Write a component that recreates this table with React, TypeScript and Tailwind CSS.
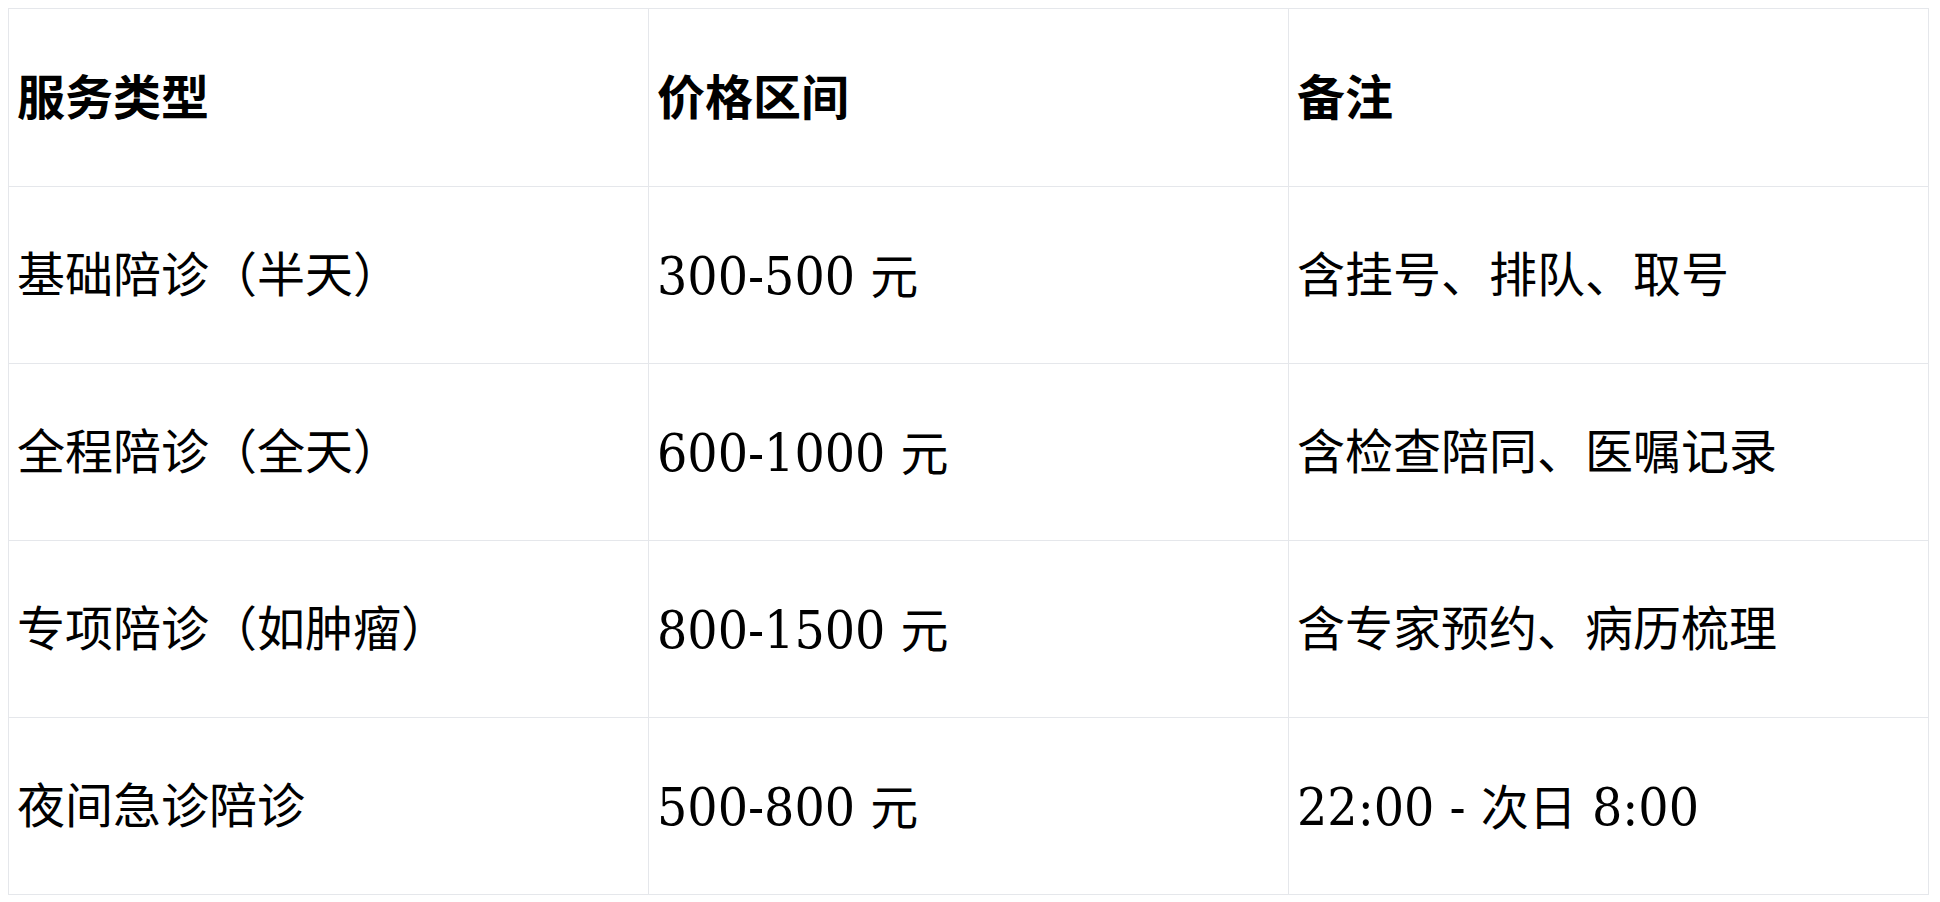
import React from "react";

const rows = [
  { type: "基础陪诊（半天）", price: "300-500 元", note: "含挂号、排队、取号" },
  { type: "全程陪诊（全天）", price: "600-1000 元", note: "含检查陪同、医嘱记录" },
  { type: "专项陪诊（如肿瘤）", price: "800-1500 元", note: "含专家预约、病历梳理" },
  { type: "夜间急诊陪诊", price: "500-800 元", note: "22:00 - 次日 8:00" },
];

const headers = ["服务类型", "价格区间", "备注"];

// latin runs render a touch larger than the CJK glyphs
const Mixed = ({ text }: { text: string }) => (
  <>
    {text.split(/([\x20-\x7E]+)/).map((part, i) =>
      /[\x21-\x7E]/.test(part) ? (
        <span key={i} className="text-[53px]">
          {part}
        </span>
      ) : (
        <React.Fragment key={i}>{part}</React.Fragment>
      )
    )}
  </>
);

const App = () => {
  return (
    <div className="min-h-screen bg-white p-2">
      <table className="w-[1921px] table-fixed border-collapse text-left font-['DejaVu_Serif_Condensed','Noto_Sans_CJK_SC',serif] text-[48px] leading-none text-black">
        <thead>
          <tr>
            {headers.map((h) => (
              <th
                key={h}
                className="h-[178px] border border-[#e5e7eb] px-2 align-middle font-bold"
              >
                {h}
              </th>
            ))}
          </tr>
        </thead>
        <tbody>
          {rows.map((row) => (
            <tr key={row.type}>
              <td className="h-[177px] border border-[#e5e7eb] px-2 align-middle font-normal">
                <Mixed text={row.type} />
              </td>
              <td className="h-[177px] border border-[#e5e7eb] px-2 align-middle font-normal">
                <Mixed text={row.price} />
              </td>
              <td className="h-[177px] border border-[#e5e7eb] px-2 align-middle font-normal">
                <Mixed text={row.note} />
              </td>
            </tr>
          ))}
        </tbody>
      </table>
    </div>
  );
};

export default App;
